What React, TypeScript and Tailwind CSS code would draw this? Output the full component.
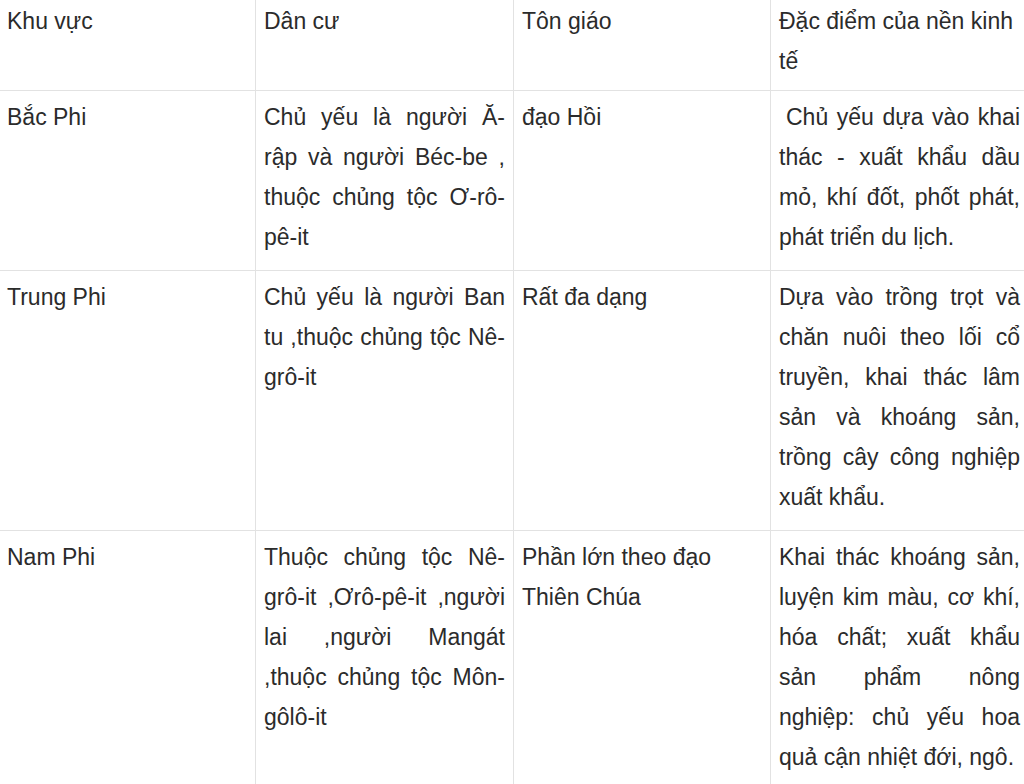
type Cell = string[];

const rows: { region: string; people: Cell; religion: Cell; economy: Cell; indent?: boolean }[] = [
  {
    region: "Bắc Phi",
    people: ["Chủ yếu là người Ă-", "rập và người Béc-be ,", "thuộc chủng tộc Ơ-rô-", "pê-it"],
    religion: ["đạo Hồi"],
    economy: ["Chủ yếu dựa vào khai", "thác - xuất khẩu dầu", "mỏ, khí đốt, phốt phát,", "phát triển du lịch."],
    indent: true,
  },
  {
    region: "Trung Phi",
    people: ["Chủ yếu là người Ban", "tu ,thuộc chủng tộc Nê-", "grô-it"],
    religion: ["Rất đa dạng"],
    economy: [
      "Dựa vào trồng trọt và",
      "chăn nuôi theo lối cổ",
      "truyền, khai thác lâm",
      "sản và khoáng sản,",
      "trồng cây công nghiệp",
      "xuất khẩu.",
    ],
  },
  {
    region: "Nam Phi",
    people: ["Thuộc chủng tộc Nê-", "grô-it ,Ơrô-pê-it ,người", "lai ,người Mangát", ",thuộc chủng tộc Môn-", "gôlô-it"],
    religion: ["Phần lớn theo đạo", "Thiên Chúa"],
    economy: [
      "Khai thác khoáng sản,",
      "luyện kim màu, cơ khí,",
      "hóa chất; xuất khẩu",
      "sản phẩm nông",
      "nghiệp: chủ yếu hoa",
      "quả cận nhiệt đới, ngô.",
    ],
  },
];

const base = "border border-[#e2e2e2] align-top pl-2 pr-2";
const head = `${base} pt-2 pb-[9px]`;
const cell = `${base} pt-[6px] pb-[13px]`;

// each line is its own block so the wrap points match the original; all but the last are justified
function Lines({ lines, justify, indent }: { lines: Cell; justify?: boolean; indent?: boolean }) {
  return (
    <>
      {lines.map((l, i) => {
        const last = i === lines.length - 1;
        return (
          <div
            key={i}
            className={`whitespace-nowrap ${justify && !last ? "text-justify [text-align-last:justify]" : ""} ${
              indent && i === 0 ? "pl-[7px]" : ""
            }`}
          >
            {l}
          </div>
        );
      })}
    </>
  );
}

export default function App() {
  return (
    <div className="w-[1024px] h-[784px] overflow-hidden bg-white">
      <table
        className="-mt-2 border-collapse table-fixed w-[1030px] -ml-[2px] text-[23px] leading-[40px] text-[#2b2b2b]"
        style={{ fontFamily: '"Liberation Sans", Arial, sans-serif' }}
      >
        <colgroup>
          <col className="w-[257px]" />
          <col className="w-[258px]" />
          <col className="w-[257px]" />
          <col className="w-[258px]" />
        </colgroup>
        <tbody>
          <tr>
            <td className={head}>Khu vực</td>
            <td className={head}>Dân cư</td>
            <td className={head}>Tôn giáo</td>
            <td className={head}>
              <Lines lines={["Đặc điểm của nền kinh", "tế"]} />
            </td>
          </tr>
          {rows.map((r) => (
            <tr key={r.region}>
              <td className={cell}>{r.region}</td>
              <td className={cell}>
                <Lines lines={r.people} justify />
              </td>
              <td className={cell}>
                <Lines lines={r.religion} />
              </td>
              <td className={cell}>
                <Lines lines={r.economy} justify indent={r.indent} />
              </td>
            </tr>
          ))}
        </tbody>
      </table>
    </div>
  );
}
